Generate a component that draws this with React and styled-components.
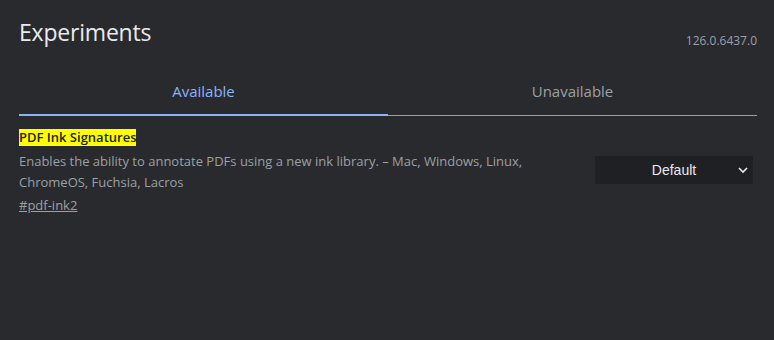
import React, { useState } from "react";
import styled, { createGlobalStyle } from "styled-components";

const Global = createGlobalStyle`
  html, body {
    margin: 0;
    background: #292a2d;
  }
  body {
    font-family: "Open Sans", "Noto Sans", sans-serif;
    color: #e8eaed;
  }
`;

const Page = styled.div`
  width: 774px;
  height: 340px;
  box-sizing: border-box;
  padding: 0 17px 0 19px;
  background: #292a2d;
`;

const Header = styled.header`
  display: flex;
  justify-content: space-between;
  align-items: flex-end;
  height: 50px;
`;

const Title = styled.h1`
  margin: 0 0 5px;
  font-size: 23px;
  font-weight: 400;
  line-height: 26px;
  color: #e8eaed;
  letter-spacing: -0.2px;
`;

const Version = styled.span`
  font-size: 12px;
  color: #9aa0a6;
  line-height: 16px;
  margin-bottom: 1px;
`;

const Tabs = styled.nav`
  display: flex;
  margin-top: 30px;
  border-bottom: 1px solid #9aa0a6;
`;

const Tab = styled.button`
  flex: 1;
  background: none;
  border: none;
  padding: 0 0 14px;
  font-family: inherit;
  font-size: 15px;
  line-height: 22px;
  cursor: pointer;
  color: ${(p) => (p.active ? "#8ab4f8" : "#9aa0a6")};
  box-shadow: ${(p) => (p.active ? "inset 0 -2px 0 #8ab4f8" : "none")};
  margin-bottom: -1px;
`;

const Experiment = styled.section`
  display: flex;
  justify-content: space-between;
  align-items: flex-start;
  padding-top: 9px;
  padding-right: 4px;
`;

const Info = styled.div`
  width: 540px;
`;

const Name = styled.h2`
  margin: 0;
  font-size: 13px;
  font-weight: 600;
  line-height: 17px;
  display: inline-block;
  background: #ffff00;
  color: #202124;
`;

const Desc = styled.p`
  margin: 4px 0 0;
  font-size: 13px;
  line-height: 21px;
  color: #9aa0a6;
`;

const Link = styled.a`
  display: inline-block;
  margin-top: 1px;
  font-size: 13px;
  line-height: 20px;
  color: #9aa0a6;
  text-decoration: underline;
`;

const SelectBox = styled.div`
  position: relative;
  margin-top: 31px;
  width: 158px;
  height: 28px;
  background: #1f2023;
  display: flex;
  align-items: center;
  justify-content: center;
  font-family: "Liberation Sans", Arial, sans-serif;
  font-size: 14px;
  color: #e8eaed;
  cursor: pointer;
`;

const Chevron = styled.svg`
  position: absolute;
  right: 4px;
  top: 9px;
`;

export default function App() {
  const [tab, setTab] = useState("available");
  return (
    <Page>
      <Global />
      <Header>
        <Title>Experiments</Title>
        <Version>126.0.6437.0</Version>
      </Header>
      <Tabs>
        <Tab active={tab === "available"} onClick={() => setTab("available")}>
          Available
        </Tab>
        <Tab active={tab === "unavailable"} onClick={() => setTab("unavailable")}>
          Unavailable
        </Tab>
      </Tabs>
      <Experiment>
        <Info>
          <Name>PDF Ink Signatures</Name>
          <Desc>
            Enables the ability to annotate PDFs using a new ink library. – Mac,
            Windows, Linux, ChromeOS, Fuchsia, Lacros
          </Desc>
          <Link href="#pdf-ink2">#pdf-ink2</Link>
        </Info>
        <SelectBox>
          Default
          <Chevron width="12" height="10" viewBox="0 0 12 10">
            <path d="M2 3 L6 7 L10 3" fill="none" stroke="#e8eaed" strokeWidth="1.6" />
          </Chevron>
        </SelectBox>
      </Experiment>
    </Page>
  );
}
